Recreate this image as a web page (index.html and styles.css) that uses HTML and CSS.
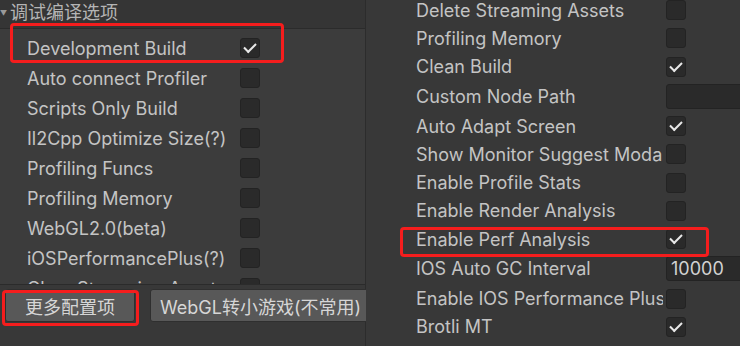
FILE: index.html
```html
<!DOCTYPE html>
<html lang="zh-CN">
<head>
    <meta charset="UTF-8">
    <title>调试编译选项</title>
    <link rel="stylesheet" href="styles.css">
</head>
<body>
    <div class="window">
        <div class="left">
            <div class="section-head"><span class="arrow">▼</span>调试编译选项</div>
            <div class="left-list">
                <div class="row"><span class="label">Development Build</span><span class="check on"></span></div>
                <div class="row"><span class="label">Auto connect Profiler</span><span class="check"></span></div>
                <div class="row"><span class="label">Scripts Only Build</span><span class="check"></span></div>
                <div class="row"><span class="label">Il2Cpp Optimize Size(?)</span><span class="check"></span></div>
                <div class="row"><span class="label">Profiling Funcs</span><span class="check"></span></div>
                <div class="row"><span class="label">Profiling Memory</span><span class="check"></span></div>
                <div class="row"><span class="label">WebGL2.0(beta)</span><span class="check"></span></div>
                <div class="row"><span class="label">iOSPerformancePlus(?)</span><span class="check"></span></div>
                <div class="row"><span class="label">Clear Streaming Assets</span><span class="check"></span></div>
            </div>
            <div class="left-footer">
                <button class="btn btn-more">更多配置项</button>
                <button class="btn btn-convert">WebGL转小游戏(不常用)</button>
            </div>
        </div>
        <div class="right">
            <div class="right-list">
                <div class="row"><span class="label">Delete Streaming Assets</span><span class="check"></span></div>
                <div class="row"><span class="label">Profiling Memory</span><span class="check"></span></div>
                <div class="row"><span class="label">Clean Build</span><span class="check on"></span></div>
                <div class="row tall"><span class="label">Custom Node Path</span><span class="field"></span></div>
                <div class="row"><span class="label">Auto Adapt Screen</span><span class="check on"></span></div>
                <div class="row"><span class="label">Show Monitor Suggest Modal</span><span class="check"></span></div>
                <div class="row"><span class="label">Enable Profile Stats</span><span class="check"></span></div>
                <div class="row"><span class="label">Enable Render Analysis</span><span class="check"></span></div>
                <div class="row"><span class="label">Enable Perf Analysis</span><span class="check on"></span></div>
                <div class="row tall"><span class="label">IOS Auto GC Interval</span><span class="field">10000</span></div>
                <div class="row"><span class="label">Enable IOS Performance Plus</span><span class="check"></span></div>
                <div class="row"><span class="label">Brotli MT</span><span class="check on"></span></div>
            </div>
        </div>

        <!-- red annotation boxes -->
        <div class="mark mark-dev"></div>
        <div class="mark mark-more"></div>
        <div class="mark mark-perf"></div>
    </div>
</body>
</html>
```

FILE: styles.css
```css
body {
    margin: 0;
    background-color: #383838;
    font-family: Inter, "Noto Sans", "Noto Sans CJK SC", sans-serif;
    color: #c4c4c4;
}
.window {
    position: relative;
    display: flex;
    width: 740px;
    height: 346px;
    overflow: hidden;
}
.left {
    width: 365px;
    flex-shrink: 0;
    display: flex;
    flex-direction: column;
    background-color: #3c3c3c;
    border-right: 1px solid #2c2c2c;
}
.section-head {
    height: 34px;
    flex-shrink: 0;
    display: flex;
    align-items: center;
    margin-top: -6px;
    background-color: #353535;
    border-bottom: 1px solid #2b2b2b;
    font-size: 18px;
    font-family: "Noto Sans CJK SC", sans-serif;
    color: #b4b4b4;
}
.section-head .arrow {
    font-size: 7px;
    color: #9a9a9a;
    width: 10px;
    margin-top: 2px;
}
.left-list {
    flex: 1;
    overflow: hidden;
    padding-top: 4px;
    padding-left: 27px;
}
.row {
    display: flex;
    align-items: center;
    height: 30px;
    font-size: 18px;
    white-space: nowrap;
}
.label {
    flex-shrink: 0;
    overflow: hidden;
}
.left-list .label {
    width: 213px;
}
.check {
    width: 18px;
    height: 18px;
    flex-shrink: 0;
    border: 1px solid #232323;
    border-radius: 3px;
    background-color: #2a2a2a;
    display: flex;
    align-items: center;
    justify-content: center;
}
.check.on::after {
    content: "";
    width: 10px;
    height: 5px;
    margin-top: -3px;
    border-left: 2px solid #e8e8e8;
    border-bottom: 2px solid #e8e8e8;
    transform: rotate(-45deg);
}
.left-footer {
    height: 57px;
    flex-shrink: 0;
    display: flex;
    align-items: flex-start;
    gap: 15px;
    padding: 4px 0 0 5px;
    background-color: #383838;
    border-top: 1px solid #2b2b2b;
}
.btn {
    height: 33px;
    flex-shrink: 0;
    border: 1px solid #2f2f2f;
    border-radius: 3px;
    background-color: #585858;
    color: #d6d6d6;
    font-family: Inter, "Noto Sans CJK SC", sans-serif;
    font-size: 18px;
    padding: 0;
}
.btn-more {
    width: 130px;
}
.btn-convert {
    width: 230px;
    text-align: left;
    padding-left: 9px;
}
.right {
    flex: 1;
    background-color: #383838;
    overflow: hidden;
}
.right-list {
    margin-top: -4px;
    padding-left: 50px;
}
.right-list .row {
    height: 28.3px;
}
.right-list .row.tall {
    height: 31px;
}
.right-list .label {
    width: 247px;
    margin-right: 3px;
}
.field {
    width: 100px;
    height: 25px;
    flex-shrink: 0;
    box-sizing: border-box;
    padding-left: 4px;
    line-height: 23px;
    border: 1px solid #232323;
    border-radius: 3px;
    background-color: #2a2a2a;
    color: #d2d2d2;
}
.mark {
    position: absolute;
    border: 3px solid #f51d1d;
    border-radius: 4px;
    box-sizing: border-box;
}
.mark-dev {
    left: 10px;
    top: 23px;
    width: 274px;
    height: 40px;
}
.mark-more {
    left: 2px;
    top: 290px;
    width: 137px;
    height: 36px;
}
.mark-perf {
    left: 400px;
    top: 227px;
    width: 309px;
    height: 30px;
}
```
